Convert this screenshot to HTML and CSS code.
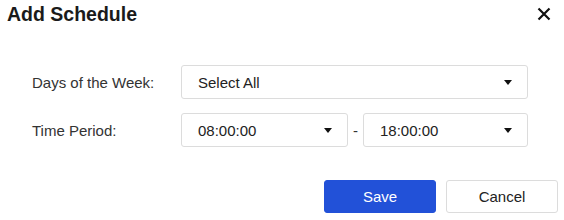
FILE: index.html
```html
<!DOCTYPE html>
<html lang="en">
<head>
    <meta charset="UTF-8">
    <title>Add Schedule</title>
    <link rel="stylesheet" href="styles.css">
</head>
<body>
    <div class="dialog">
        <div class="dialog-header">
            <h2 class="dialog-title">Add Schedule</h2>
            <button class="close-btn" aria-label="Close">
                <svg width="14" height="14" viewBox="0 0 14 14">
                    <path d="M1.5 1.5 L12.5 12.5 M12.5 1.5 L1.5 12.5" stroke="#111" stroke-width="2.2" fill="none"/>
                </svg>
            </button>
        </div>

        <div class="dialog-body">
            <div class="form-row">
                <label class="form-label">Days of the Week:</label>
                <div class="select select-wide">
                    <span>Select All</span>
                    <i class="caret"></i>
                </div>
            </div>
            <div class="form-row">
                <label class="form-label">Time Period:</label>
                <div class="time-range">
                    <div class="select select-start">
                        <span>08:00:00</span>
                        <i class="caret"></i>
                    </div>
                    <span class="dash">-</span>
                    <div class="select select-end">
                        <span>18:00:00</span>
                        <i class="caret"></i>
                    </div>
                </div>
            </div>
        </div>

        <div class="dialog-footer">
            <button class="btn btn-primary">Save</button>
            <button class="btn btn-default">Cancel</button>
        </div>
    </div>
</body>
</html>
```

FILE: styles.css
```css
* {
    box-sizing: border-box;
}
body {
    margin: 0;
    font-family: "Liberation Sans", Arial, sans-serif;
    color: #333;
    background: #fff;
}
.dialog {
    width: 564px;
    height: 220px;
}
.dialog-header {
    display: flex;
    justify-content: space-between;
    align-items: center;
    padding: 2px 13px 0 7px;
    height: 26px;
}
.dialog-title {
    margin: 0;
    font-size: 19.5px;
    line-height: 24px;
    font-weight: bold;
    color: #1a1a1a;
}
.close-btn {
    border: none;
    background: none;
    padding: 0;
    width: 14px;
    height: 14px;
    display: flex;
    cursor: pointer;
}
.dialog-body {
    padding: 39px 0 0 32px;
    display: flex;
    flex-direction: column;
    gap: 14px;
}
.form-row {
    display: flex;
    align-items: center;
    height: 34px;
}
.form-label {
    width: 149px;
    font-size: 15px;
    color: #333;
}
.select {
    height: 34px;
    border: 1px solid #dcdcdc;
    border-radius: 3px;
    display: flex;
    align-items: center;
    justify-content: space-between;
    padding: 0 15px 0 16px;
    font-size: 15px;
    color: #222;
    background: #fff;
}
.select-wide {
    width: 347px;
}
.time-range {
    display: flex;
    align-items: center;
}
.select-start {
    width: 167px;
}
.select-end {
    width: 165px;
}
.dash {
    width: 15px;
    text-align: center;
    font-size: 15px;
    color: #333;
}
.caret {
    width: 0;
    height: 0;
    border-left: 4.5px solid transparent;
    border-right: 4.5px solid transparent;
    border-top: 5px solid #111;
}
.dialog-footer {
    display: flex;
    justify-content: flex-end;
    gap: 10px;
    padding: 33px 6px 0 0;
}
.btn {
    width: 112px;
    height: 33px;
    border-radius: 3px;
    font-family: inherit;
    font-size: 15px;
    cursor: pointer;
}
.btn-primary {
    background: #2251d8;
    border: 1px solid #2251d8;
    color: #fff;
}
.btn-default {
    background: #fff;
    border: 1px solid #dcdcdc;
    color: #222;
}
```
